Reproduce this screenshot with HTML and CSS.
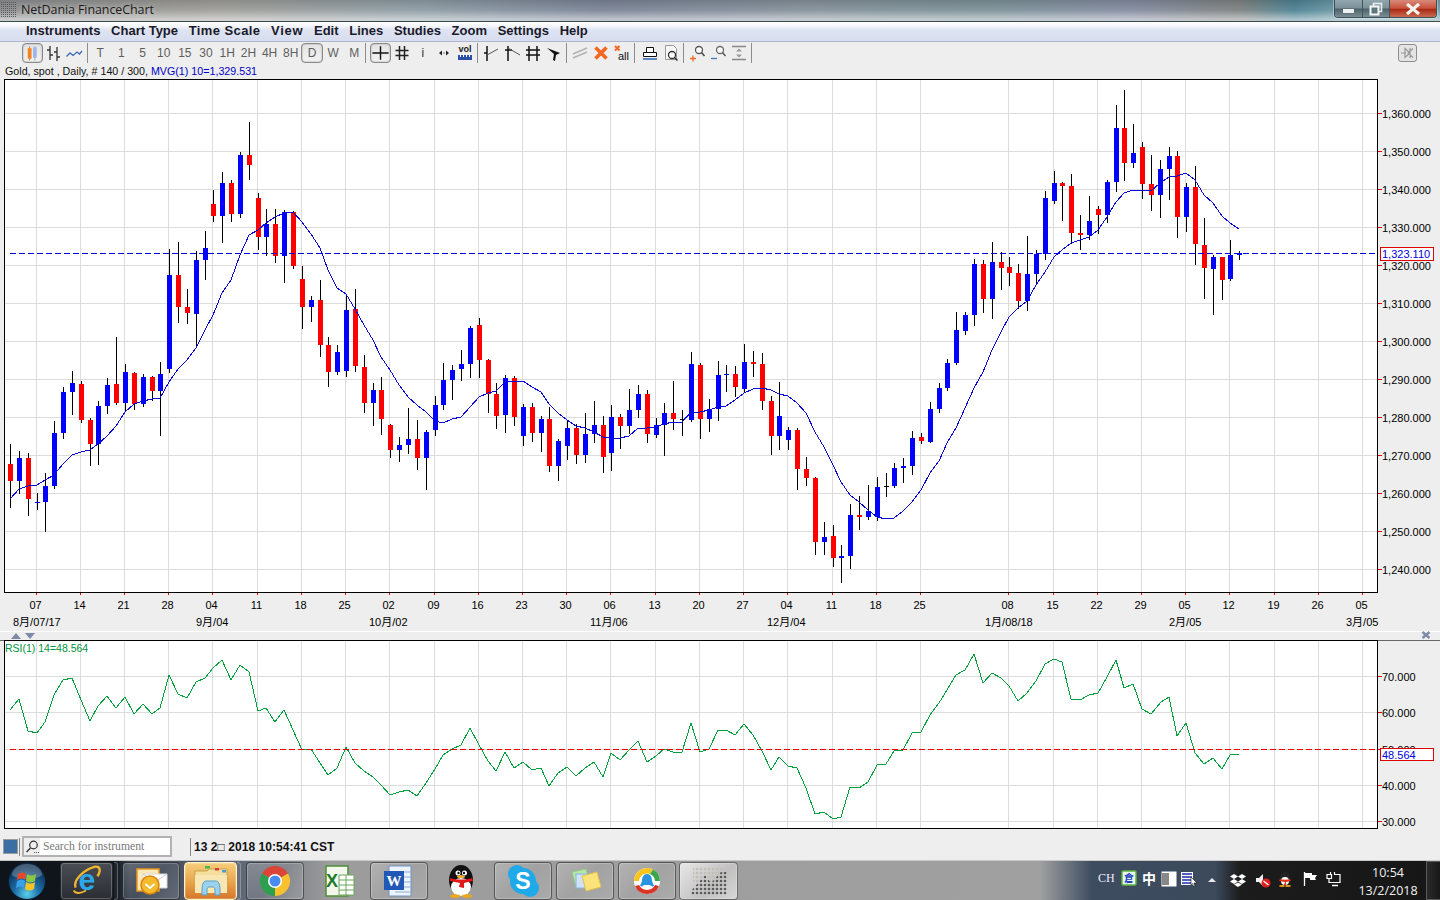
FILE: index.html
```html
<!DOCTYPE html>
<html lang="en">
<head>
<meta charset="utf-8">
<title>NetDania FinanceChart</title>
<link rel="stylesheet" href="styles.css">
</head>
<body>
<div class="window">
  <header class="titlebar">
    <svg class="app-icon" viewBox="0 0 16 16" width="16" height="16"><defs><pattern id="appdots" width="2" height="2" patternUnits="userSpaceOnUse"><rect width="1" height="1" fill="#55585a"/></pattern></defs><rect width="16" height="16" fill="url(#appdots)"/></svg>
    <span class="title-text">NetDania FinanceChart</span>
    <div class="win-controls">
      <div class="win-btn win-min"><i class="min-bar"></i></div>
      <div class="win-btn win-max"><svg viewBox="0 0 14 14" width="14" height="14"><rect x="4.5" y="1.5" width="8" height="8" fill="none" stroke="#e8eef0" stroke-width="1.6"/><rect x="1.5" y="4.5" width="8" height="8" fill="#60777f" stroke="#f4f8fa" stroke-width="2"/></svg></div>
      <div class="win-btn win-close"><svg viewBox="0 0 16 12" width="16" height="12"><path d="M2 1l12 10M14 1L2 11" stroke="#f4f2ee" stroke-width="3.2"/></svg></div>
    </div>
  </header>

  <nav class="menubar">
    <span>Instruments</span><span>Chart Type</span><span class="m-time">Time Scale</span><span class="m-view">View</span><span>Edit</span><span>Lines</span><span>Studies</span><span>Zoom</span><span>Settings</span><span>Help</span>
  </nav>

  <div class="toolbar">
    <div class="cell active"><svg viewBox="0 0 20 20" width="20" height="20"><path d="M7 3v15" stroke="#c9742d"/><rect x="5" y="5" width="4" height="11" fill="#f58220"/><path d="M12.5 3v15" stroke="#90a6cc"/><rect x="10.5" y="4" width="4" height="11" fill="#9db8e6"/></svg></div>
    <div class="cell"><svg viewBox="0 0 20 20" width="20" height="20"><path d="M7 3v14M4 7h3M7 12h3M14 4v14M11 9h3M14 14h3" stroke="#333" stroke-width="1.3" fill="none"/></svg></div>
    <div class="cell"><svg viewBox="0 0 20 20" width="20" height="20"><path d="M2.500 13.500L6 10l3 2.500 4-3.500 2.500 2L18 8" stroke="#3d6cb5" stroke-width="1.300" fill="none"/></svg></div>
    <i class="sep"></i>
    <div class="cell tf">T</div><div class="cell tf">1</div><div class="cell tf">5</div><div class="cell tf">10</div><div class="cell tf">15</div><div class="cell tf">30</div><div class="cell tf">1H</div><div class="cell tf">2H</div><div class="cell tf">4H</div><div class="cell tf">8H</div><div class="cell tf active">D</div><div class="cell tf">W</div><div class="cell tf">M</div>
    <i class="sep sep-wide"></i>
    <div class="cell active"><svg viewBox="0 0 20 20" width="20" height="20"><path d="M1.500 10h17M10 3v14" stroke="#111" stroke-width="1.500"/></svg></div>
    <div class="cell"><svg viewBox="0 0 20 20" width="20" height="20"><path d="M7.500 3v14M12.500 3v14M3.500 7.500h13M3.500 12.500h13" stroke="#222" stroke-width="1.500"/></svg></div>
    <div class="cell tf icon-i">i</div>
    <div class="cell"><svg viewBox="0 0 20 20" width="20" height="20"><path d="M5 10l3-2.500v5zM15 10l-3-2.500v5z" fill="#222"/><path d="M9 10h2" stroke="#777"/></svg></div>
    <div class="cell"><svg viewBox="0 0 20 20" width="20" height="20"><text x="10" y="9" class="vol-text" text-anchor="middle">vol</text><rect x="3" y="12" width="14" height="5" fill="#2c4fa8"/><path d="M5.500 11v3M8.500 10.500v3.500M11.500 11v3M14.500 10.500v3.500" stroke="#fff"/></svg></div>
    <i class="sep"></i>
    <div class="cell"><svg viewBox="0 0 20 20" width="20" height="20"><path d="M6 3v15M3 10h3" stroke="#111" stroke-width="1.500"/><path d="M6 12l11-6" stroke="#555"/></svg></div>
    <div class="cell"><svg viewBox="0 0 20 20" width="20" height="20"><path d="M6 3v15M3 7h7" stroke="#111" stroke-width="1.500"/><path d="M6 5l12 7" stroke="#555"/></svg></div>
    <div class="cell"><svg viewBox="0 0 20 20" width="20" height="20"><path d="M6 3v15M14 3v15M3 7h14M3 12h14" stroke="#111" stroke-width="1.500"/></svg></div>
    <div class="cell"><svg viewBox="0 0 20 20" width="20" height="20"><path d="M3 5l13 5-4 2-1 6-2-1 1-6z" fill="#111"/></svg></div>
    <i class="sep"></i>
    <div class="cell"><svg viewBox="0 0 20 20" width="20" height="20"><path d="M3 11l14-6M3 15l14-6" stroke="#b4b4b4" stroke-width="1.800"/></svg></div>
    <div class="cell"><svg viewBox="0 0 20 20" width="20" height="20"><path d="M4.500 4.500l11 11M15.500 4.500l-11 11" stroke="#f4671f" stroke-width="3.600"/></svg></div>
    <div class="cell"><svg viewBox="0 0 20 20" width="20" height="20"><path d="M3 3l4.500 4.500M7.500 3L3 7.500" stroke="#f4671f" stroke-width="2"/><text x="6" y="17" class="all-text">all</text></svg></div>
    <i class="sep sep-after"></i>
    <div class="cell"><svg viewBox="0 0 20 20" width="20" height="20"><path d="M6.500 4.500h7v5h-7z" fill="#fff" stroke="#111"/><path d="M3.500 9.500h13v4h-13z" fill="#fff" stroke="#111"/><path d="M3 16h14" stroke="#2c62b8" stroke-width="1.500"/></svg></div>
    <div class="cell"><svg viewBox="0 0 20 20" width="20" height="20"><path d="M4.500 2.500h8l3 3v11h-11z" fill="#f6f6f6" stroke="#999"/><circle cx="11" cy="12" r="3.500" fill="#fff" stroke="#333" stroke-width="1.300"/><path d="M13.500 14.500l3 3" stroke="#333" stroke-width="1.500"/></svg></div>
    <i class="sep"></i>
    <div class="cell"><svg viewBox="0 0 20 20" width="20" height="20"><circle cx="12" cy="7" r="3.500" fill="#fff" stroke="#555" stroke-width="1.300"/><path d="M14.500 9.500l3 3.500" stroke="#444" stroke-width="1.500"/><path d="M6 12.500v6M3 15.500h6" stroke="#f4671f" stroke-width="1.300"/></svg></div>
    <div class="cell"><svg viewBox="0 0 20 20" width="20" height="20"><circle cx="12" cy="7" r="3.500" fill="#fff" stroke="#666" stroke-width="1.300"/><path d="M14.500 9.500l3 3.500" stroke="#555" stroke-width="1.500"/><path d="M3 15.500h6" stroke="#4a78c0" stroke-width="1.300"/></svg></div>
    <div class="cell"><svg viewBox="0 0 20 20" width="20" height="20"><path d="M3 3.500h14M3 16.500h14" stroke="#888" stroke-width="1.600"/><path d="M10 5.500l3 3H7zM10 14.500l3-3H7z" fill="#999"/></svg></div>
    <i class="sep"></i>
    <div class="pin"><svg viewBox="0 0 16 14" width="16" height="14"><path d="M1 7h5M5 2.500l5 4.500-5 4.500zM10 2v10M13 2.500L8 7l5 4.500" stroke="#999" stroke-width="1.200" fill="none"/></svg></div>
  </div>

  <div class="info"><span>Gold, spot , Daily, # 140 / 300,</span> <span class="info-mvg">MVG(1) 10=1,329.531</span></div>

  <svg id="price" class="chart chart-price" viewBox="0 79 1440 552" width="1440" height="552"></svg>

  <div class="splitter">
    <i class="tri tri-up"></i><i class="tri tri-down"></i>
    <svg class="split-x" viewBox="0 0 10 8" width="10" height="8"><path d="M1.500 1l7 6M8.500 1l-7 6" stroke="#7d8aa8" stroke-width="2.400"/></svg>
  </div>

  <svg id="rsi" class="chart chart-rsi" viewBox="0 640 1440 189" width="1440" height="189"></svg>

  <div class="status">
    <i class="status-square"></i>
    <i class="status-div"></i>
    <div class="search">
      <div class="search-icon"><svg viewBox="0 0 14 14" width="14" height="14"><circle cx="8.500" cy="5" r="3.800" fill="none" stroke="#333" stroke-width="1.200"/><path d="M5.500 8L1.500 12" stroke="#333" stroke-width="1.400"/><path d="M9 12.500h1M11 12.500h1M13 12.500h1" stroke="#555"/></svg></div>
      <span class="search-text">Search for instrument</span>
    </div>
    <i class="status-div status-div-2"></i>
    <span class="clock-text">13 2□ 2018 10:54:41 CST</span>
  </div>

  <footer class="taskbar">
    <div class="start"><svg viewBox="0 0 40 40" width="40" height="40"><defs><radialGradient id="orb" cx="50%" cy="85%" r="75%"><stop offset="0" stop-color="#5ccfe8"/><stop offset=".45" stop-color="#1c6ea8"/><stop offset="1" stop-color="#0a2a4c"/></radialGradient></defs><circle cx="20" cy="20" r="18.500" fill="url(#orb)" stroke="#0b1c2c"/><path d="M5 14a15 11 0 0 1 30 0c-5 5-25 5-30 0z" fill="#fff" opacity=".25"/><path d="M11 13c3-2 6-2 8 0l-1 6c-2-2-5-2-8 0z" fill="#e8472c"/><path d="M20 13c3 2 6 2 9 0l-1 7c-3 2-6 2-9 0z" fill="#8dc63f"/><path d="M10 20c3-2 6-2 8 0l-1 7c-2-2-5-2-8 0z" fill="#3aa0e8"/><path d="M19 21c3 2 6 2 9 0l-1 7c-3 2-6 2-9 0z" fill="#f7c427"/></svg></div>

    <div class="tb-btn b-ie"><svg viewBox="0 0 38 38" width="38" height="36"><text x="19" y="28" class="ie-e" text-anchor="middle">e</text><path d="M7 26C4 19 15 7 27 4c6-1 7 4 3 10" fill="none" stroke="#f0b72d" stroke-width="2.500"/><path d="M5 29c2 4 8 3 13 0" fill="none" stroke="#f0b72d" stroke-width="2"/></svg></div>
    <i class="stack b-st1"></i>
    <div class="tb-btn b-ol"><svg viewBox="0 0 36 36" width="36" height="36"><path d="M4 6h22v22H4z" fill="#fbe9b7" stroke="#e8971f" stroke-width="1.500"/><path d="M10 11h24v14H10z" fill="#fff" stroke="#d9d9d9"/><path d="M10 11l12 8 12-8" fill="none" stroke="#ccc"/><circle cx="17" cy="22" r="9" fill="#f5bb2e" stroke="#d9860f" stroke-width="1.500"/><path d="M12.500 21l4.500 4 4.500-4" fill="none" stroke="#fff" stroke-width="1.800"/></svg></div>
    <div class="tb-btn b-fo"><svg viewBox="0 0 40 36" width="40" height="36"><path d="M4 8h12l2-2h18v22H4z" fill="#f4de9e" stroke="#c9a24d"/><rect x="14" y="3" width="5" height="2.500" fill="#49b749"/><rect x="24" y="5" width="4" height="2.500" fill="#d83c2e"/><rect x="31" y="7" width="4" height="2.500" fill="#4a9ed8"/><path d="M4 12h32v18H4z" fill="#f8e7b2"/><path d="M11 27c0-7 2-9 4-9h10c2 0 4 2 4 9v5h-5v-5c0-2-1-3-2-3h-4c-1 0-2 1-2 3v5h-5z" fill="#9bd0ee" stroke="#5a9fc8"/></svg></div>
    <i class="stack b-st2"></i>
    <div class="tb-btn b-ch"><svg viewBox="0 0 36 36" width="36" height="36"><path d="M18 18L5 10.500A15 15 0 0 1 31 10.500Z" fill="#dc4437"/><path d="M18 18L31 10.500A15 15 0 0 1 18 33Z" fill="#fbc02d"/><path d="M18 18L18 33A15 15 0 0 1 5 10.500Z" fill="#2e9e4f"/><circle cx="18" cy="18" r="7" fill="#fff"/><circle cx="18" cy="18" r="5.500" fill="#4a8bf0"/></svg></div>
    <div class="tb-flat b-xl"><svg viewBox="0 0 36 36" width="36" height="36"><path d="M6 3h22v30H6z" fill="#f4f8ec" stroke="#4d8f3a" stroke-width="1.500"/><path d="M19 12h15v20H19z" fill="#fff" stroke="#6aa858"/><path d="M19 17h15M19 22h15M19 27h15M26 12v20" stroke="#6aa858"/><text x="12" y="24" class="xl-x" text-anchor="middle">X</text></svg></div>
    <div class="tb-btn b-wd"><svg viewBox="0 0 36 36" width="36" height="36"><path d="M8 3h22v30H8z" fill="#eef4fb" stroke="#6f93c4"/><path d="M14 9h16M14 14h16M14 19h16M14 24h16M14 29h16" stroke="#8eacd6"/><path d="M3 8h20v19H3z" fill="#2157b5"/><text x="13" y="23" class="wd-w" text-anchor="middle">W</text></svg></div>
    <div class="tb-flat b-qq"><svg viewBox="0 0 30 36" width="30" height="36"><ellipse cx="15" cy="17" rx="12" ry="15" fill="#111"/><ellipse cx="15" cy="24" rx="10" ry="9" fill="#fff"/><path d="M6 3c0 0 0 0 0 0" fill="none"/><circle cx="12" cy="10" r="2.500" fill="#fff"/><circle cx="18.500" cy="10" r="2.500" fill="#fff"/><circle cx="12.500" cy="10" r="1.200" fill="#111"/><circle cx="18" cy="10" r="1.200" fill="#111"/><ellipse cx="15" cy="13.500" rx="4" ry="1.500" fill="#f0b030"/><path d="M4 15c6 2 16 2 22 0l1 3-9 2v5l-5-1 1-4-10-2z" fill="#e01818"/><ellipse cx="9" cy="33" rx="5" ry="1.800" fill="#f0a818"/><ellipse cx="21" cy="33" rx="5" ry="1.800" fill="#f0a818"/></svg></div>
    <div class="tb-btn b-sk"><svg viewBox="0 0 36 36" width="36" height="36"><circle cx="12" cy="11" r="9" fill="#1fa9e8"/><circle cx="25" cy="25" r="9" fill="#1fa9e8"/><circle cx="18" cy="18" r="13" fill="#1fa9e8"/><text x="18" y="26" class="sk-s" text-anchor="middle">S</text></svg></div>
    <div class="tb-btn b-no"><svg viewBox="0 0 36 36" width="36" height="36"><path d="M5 9l14-3 4 15-14 3z" fill="#b6e6a8" stroke="#92cc82"/><rect x="9" y="11" width="14" height="14" fill="#cfe2f8" stroke="#8ab4e0"/><path d="M15 13l15-4 4 15-15 4z" fill="#fbe27a" stroke="#e0c24a"/></svg></div>
    <div class="tb-btn b-tn"><svg viewBox="0 0 36 36" width="36" height="36"><circle cx="18" cy="18" r="13" fill="#fff"/><path d="M5 18A13 13 0 0 1 24 6.500L21 11A8 8 0 0 0 10 18z" fill="#f6c51e"/><path d="M24 6.500A13 13 0 0 1 31 18L26 18A8 8 0 0 0 21 11z" fill="#3aa84a"/><path d="M6 23A13 13 0 0 0 30 23L26 22A9 9 0 0 1 10 22z" fill="#d83428"/><path d="M18 11c4 0 5 4 5 7l2 5c-2 1-3 0-4-1h-6c-1 1-2 2-4 1l2-5c0-3 1-7 5-7z" fill="#2a94e0"/></svg></div>
    <div class="tb-btn b-nd"><svg viewBox="0 0 36 36" width="36" height="36"><defs><pattern id="dotl" width="4" height="4" patternUnits="userSpaceOnUse"><circle cx="2" cy="2" r="1.300" fill="#c2bfb4"/></pattern><pattern id="dotd" width="4" height="4" patternUnits="userSpaceOnUse"><circle cx="2" cy="2" r="1.300" fill="#5a5a5a"/></pattern></defs><rect x="2" y="3" width="32" height="18" fill="url(#dotl)"/><path d="M0 28L14 12l6 8 10-11 6 0v23H0z" fill="url(#dotd)"/></svg></div>

    <div class="tray">
      <span class="tray-ch">CH</span>
      <svg class="t-ic" viewBox="0 0 16 16" width="16" height="16"><rect x="1" y="1" width="14" height="14" rx="1" fill="#eaf6ea" stroke="#5fb33f" stroke-width="1.500"/><text x="8" y="12" class="tray-cang" text-anchor="middle">倉</text></svg>
      <span class="tray-zh">中</span>
      <svg class="t-half" viewBox="0 0 16 16" width="16" height="16"><rect x=".5" y=".5" width="15" height="15" fill="#fff"/><rect x="1" y="2" width="7" height="12" fill="#888"/></svg>
      <svg class="t-list" viewBox="0 0 17 16" width="17" height="16"><rect x="0" y="1" width="12" height="13" fill="#fff"/><path d="M1 3h10M1 6h10M1 9h10M1 12h10" stroke="#1a2ea8" stroke-width="1.300"/><path d="M10 6l6 6-3 0 1 3-1.500.5-1-3-1.500 1.500z" fill="#fff" stroke="#111" stroke-width=".6"/></svg>
      <i class="t-up"></i>
      <svg class="t-db" viewBox="0 0 16 14" width="16" height="14"><path d="M4 1l4 2.500-4 2.500-4-2.500zM12 1l4 2.500-4 2.500-4-2.500zM4 6l4 2.500-4 2.500-4-2.500zM12 6l4 2.500-4 2.500-4-2.500zM4 11.500l4-2 4 2-4 2.500z" fill="#fff"/></svg>
      <svg class="t-spk" viewBox="0 0 16 16" width="16" height="16"><path d="M1 6h3l4-4v12l-4-4H1z" fill="#f0f0f0"/><circle cx="11" cy="11" r="4.500" fill="#e0201c"/><path d="M8.500 9l5 4" stroke="#fff" stroke-width="1.500"/></svg>
      <svg class="t-qq" viewBox="0 0 16 16" width="16" height="16"><ellipse cx="8" cy="7" rx="5" ry="6" fill="#222"/><ellipse cx="8" cy="10" rx="4" ry="4" fill="#fff"/><path d="M3 8c3 1 7 1 10 0l1 2-5 1v3H7l1-3-6-1z" fill="#e03018"/><ellipse cx="5" cy="15" rx="3" ry="1" fill="#f0a018"/><ellipse cx="11" cy="15" rx="3" ry="1" fill="#f0a018"/></svg>
      <svg class="t-flag" viewBox="0 0 16 16" width="16" height="16"><path d="M2.500 1v14" stroke="#fff" stroke-width="1.300"/><path d="M3 2h7v2h5l-2 3 1 2H8V7H3z" fill="#fff"/></svg>
      <svg class="t-net" viewBox="0 0 16 16" width="16" height="16"><path d="M5.500 1v2M9.500 1v2M2 3.500h4.500v4H2z" stroke="#fff" fill="none" stroke-width="1.200"/><path d="M4 7.500v4h11V3.500H9" stroke="#fff" fill="none" stroke-width="1.200"/><path d="M7 14.500h6" stroke="#fff" stroke-width="1.500"/></svg>
      <div class="tray-clock"><span>10:54</span><span>13/2/2018</span></div>
      <div class="show-desktop"></div>
    </div>
  </footer>
</div>
<script src="chart.js"></script>
</body>
</html>
```

FILE: styles.css
```css
* { box-sizing: border-box; }
html, body { margin: 0; padding: 0; }
body { width: 1440px; height: 900px; overflow: hidden; background: #eeeeee; font-family: "Liberation Sans", Arial, sans-serif; }
.window { display: flex; flex-direction: column; width: 1440px; height: 900px; }
i { display: block; }

/* title bar */
.titlebar { display: flex; align-items: center; flex: 0 0 22px; height: 22px; padding: 0 0 2px 1px; border-bottom: 1px solid #3c4a50;
  background:
    linear-gradient(180deg, rgba(0,0,0,.12) 0, rgba(255,255,255,.06) 50%, rgba(255,255,255,.5) 92%),
    linear-gradient(90deg, #8e9092 0, #a09f9a 220px, #8f9ea6 420px, #7c8598 600px, #87929c 800px, #7d9399 980px, #858da2 1130px, #7f8482 1240px, #4e8395 1295px, #6e9aa6 1340px, #75a0ab 1440px); }
.app-icon { flex: none; }
.title-text { margin-left: 4px; font: 12.5px/18px "Open Sans", "Liberation Sans", sans-serif; color: #1e1a18; text-shadow: 0 0 5px rgba(255,255,255,.55); letter-spacing: -.1px; }
.win-controls { display: flex; margin-left: auto; margin-right: 3px; align-self: flex-start; height: 18px; border: 1px solid #3a4e56; border-top: 0; border-radius: 0 0 4px 4px; overflow: hidden; box-shadow: 0 0 0 1px rgba(255,255,255,.35); }
.win-btn { display: flex; align-items: center; justify-content: center; height: 17px; border-right: 1px solid #42565e; background: linear-gradient(180deg, #93a6ad 0, #7a8f97 48%, #4d616a 52%, #7c8e94 100%); }
.win-min { width: 28px; }
.win-max { width: 27px; }
.win-close { width: 46px; border-right: 0; background: linear-gradient(180deg, #d8897a 0, #c9523c 48%, #a92a14 55%, #c96a52 100%); }
.min-bar { width: 11px; height: 4px; margin-top: 4px; background: #eef2f2; box-shadow: 0 0 1px #333; }

/* menu */
.menubar { display: flex; flex: 0 0 20px; height: 20px; align-items: center; gap: 10.7px; padding-left: 26px; padding-bottom: 1px; font: bold 13px/18px "Liberation Sans", sans-serif; color: #1a1a2a; background: linear-gradient(180deg, #ffffff 0, #f6f8fc 18%, #dfe4f3 42%, #d7ddef 100%); border-bottom: 1px solid #b0b4cc; }
.m-time { letter-spacing: .4px; }
.m-view { letter-spacing: .7px; }

/* toolbar */
.toolbar { display: flex; flex: 0 0 22px; height: 22px; align-items: center; padding-left: 21.5px; background: #eeeeee; }
.cell { display: flex; align-items: center; justify-content: center; flex: none; width: 21px; height: 20px; }
.tf { width: 21.2px; font: 12px/20px "Liberation Sans", sans-serif; color: #5e5e5e; }
.active { border: 1px solid #8a8a8a; border-radius: 4px; background: linear-gradient(180deg, #e4e4e4, #f3f3f3); box-shadow: inset 0 0 2px #999; }
.icon-i { width: 21px; color: #333; }
.sep { flex: none; width: 1px; height: 20px; margin: 0 2px; background: #8c8c8c; }
.sep-wide { margin-left: 0; margin-right: 4.5px; }
.sep-after { margin-right: 4px; }
.vol-text { font: bold 9px "Liberation Sans", sans-serif; fill: #222; }
.all-text { font: 11px "Liberation Sans", sans-serif; fill: #111; }
.pin { display: flex; align-items: center; justify-content: center; width: 19px; height: 18px; margin-left: auto; margin-right: 23px; border: 1px solid #8e8e8e; border-radius: 3px; background: #e4e4e4; }

.info { flex: 0 0 15px; height: 15px; padding-left: 5px; font: 10.7px/14px "Liberation Sans", sans-serif; color: #111; white-space: pre; }
.info-mvg { color: #0000c8; }

/* charts */
.chart { display: block; flex: none; background: #eeeeee; }
.ax { font: 11px "Liberation Sans", sans-serif; fill: #000; }
.ax-date { font: 11px "Liberation Sans", "Noto Sans CJK SC", sans-serif; fill: #000; }
.val { font: 11px "Liberation Sans", sans-serif; fill: #0000e0; }
.rsi-label { font: 10.5px "Liberation Sans", sans-serif; fill: #00963c; }

.splitter { display: flex; flex: 0 0 9px; height: 9px; align-items: flex-end; padding: 0 9px 1px 11px; border-top: 1px solid #fff; background: #eeeeee; }
.tri { width: 0; height: 0; border-left: 5.5px solid transparent; border-right: 5.5px solid transparent; }
.tri-up { border-bottom: 6px solid #7d8aa8; }
.tri-down { margin-left: 4px; border-top: 6px solid #7d8aa8; }
.split-x { margin-left: auto; margin-bottom: 0; }

/* status */
.status { display: flex; flex: 0 0 31px; height: 31px; align-items: center; padding-left: 4px; background: #eeeeee; padding-top: 4px; }
.status-square { width: 13px; height: 13px; background: #3d6ea3; box-shadow: 0 0 0 1px #9a9a9a; }
.status-div { width: 1px; height: 18px; margin-left: 2px; background: #888; }
.status-div-2 { margin-left: 18px; }
.search { display: flex; align-items: center; width: 150px; height: 21px; margin-left: 2px; border: 2px solid #b2b2b2; background: #fff; }
.search-icon { display: flex; align-items: center; justify-content: center; width: 16px; height: 17px; background: #eeeeee; }
.search-text { margin-left: 3px; font: 11.7px/16px "Liberation Serif", serif; color: #7a7a7a; }
.clock-text { margin-left: 3px; font: bold 12px/16px "Liberation Sans", sans-serif; color: #111; white-space: pre; letter-spacing: .05px; }

/* taskbar */
.taskbar { position: relative; display: flex; flex: 0 0 40px; height: 40px; padding-top: 1px; border-top: 1px solid #c8c8c8; background: linear-gradient(90deg, #0e141a 0, #10161c 115px, #3c4452 130px, #5e6674 240px, #9c9c9c 330px, #a0a0a0 1040px, #3e4c60 1092px, #3c4a5c 1215px, #1c1c1c 1240px, #161616 1440px); }
.start { display: flex; align-items: center; justify-content: center; flex: none; width: 54px; margin-bottom: 1px; }
.tb-btn, .tb-flat { display: flex; align-items: center; justify-content: center; flex: none; height: 38px; }
.tb-btn { border: 1px solid rgba(20,20,20,.55); border-radius: 4px; background: linear-gradient(135deg, rgba(255,255,255,.22), rgba(255,255,255,.05) 50%, rgba(255,255,255,.14)); box-shadow: inset 0 0 0 1px rgba(255,255,255,.22); }
.stack { flex: none; width: 4px; height: 38px; border: 1px solid rgba(255,255,255,.25); border-left: 0; border-radius: 0 3px 3px 0; background: rgba(255,255,255,.06); }
.b-ie { width: 53px; margin-left: 6px; background: linear-gradient(180deg, #4a4e54, #2a2e34); }
.b-st1 { margin-left: 1px; }
.b-ol { width: 58px; margin-left: 4px; }
.b-fo { width: 53px; margin-left: 4px; background: linear-gradient(180deg, #f6cf7c 0, #e8a24a 55%, #d4762a 100%); border-color: #fff2c8; }
.b-st2 { margin-left: 0; }
.b-ch { width: 58px; margin-left: 5px; }
.b-xl { width: 65px; margin-left: 1px; }
.b-wd { width: 58px; }
.b-qq { width: 66px; }
.b-sk { width: 58px; }
.b-no { width: 58px; margin-left: 4px; }
.b-tn { width: 58px; margin-left: 4px; }
.b-nd { width: 59px; margin-left: 3px; background: linear-gradient(135deg, #e8e8e8, #c0c0c0 60%, #d8d8d8); }
.ie-e { font: bold 32px "Liberation Sans", sans-serif; fill: #2aa8ea; }
.xl-x { font: bold 18px "Liberation Sans", sans-serif; fill: #1d7a2c; }
.wd-w { font: bold 15px "Liberation Serif", serif; fill: #fff; }
.sk-s { font: bold 23px "Liberation Sans", sans-serif; fill: #fff; }

.tray { position: absolute; top: 0; right: 0; bottom: 0; width: 350px; color: #fff; }
.tray > * { position: absolute; }
.tray-ch { left: 8px; top: 10px; font: 12px/14px "Liberation Serif", serif; color: #eef; }
.t-ic { left: 31px; top: 9px; }
.tray-cang { font: bold 10px "Noto Sans CJK TC", sans-serif; fill: #2040c0; }
.tray-zh { left: 52px; top: 8px; font: bold 14px/18px "Noto Sans CJK TC", sans-serif; color: #fff; }
.t-half { left: 71px; top: 10px; }
.t-list { left: 91px; top: 10px; }
.t-up { left: 118px; top: 17px; width: 0; height: 0; border-left: 4px solid transparent; border-right: 4px solid transparent; border-bottom: 4px solid #e8e8e8; }
.t-db { left: 140px; top: 12px; }
.t-spk { left: 165px; top: 11px; }
.t-qq { left: 187px; top: 10px; }
.t-flag { left: 212px; top: 10px; }
.t-net { left: 235px; top: 10px; }
.tray-clock { left: 263px; top: 3px; display: flex; flex-direction: column; align-items: center; width: 70px; font: 12.5px/18px "Open Sans", "Liberation Sans", sans-serif; color: #f2f2f2; }
.show-desktop { right: 0; top: 0; bottom: 0; width: 14px; border: 1px solid #5a5a5a; border-right: 0; background: linear-gradient(90deg, #2a2a2a, #181818); }
```

FILE: chart.js
```js
var NS = 'http://www.w3.org/2000/svg';
function el(p, n, a, t) {
  var e = document.createElementNS(NS, n);
  for (var k in a) e.setAttribute(k, a[k]);
  if (t !== undefined) e.textContent = t;
  p.appendChild(e);
  return e;
}
var GX = [36,80,124,168,212,257,301,345,389,434,478,522,566,610,655,699,743,787,832,876,920,1008,1053,1097,1141,1185,1229,1274,1318,1362];
var DAYS = ['07','14','21','28','04','11','18','25','02','09','16','23','30','06','13','20','27','04','11','18','25','08','15','22','29','05','12','19','26','05'];
var MONTHS = [[13,'8月/07/17'],[196,'9月/04'],[369,'10月/02'],[590,'11月/06'],[767,'12月/04'],[985,'1月/08/18'],[1169,'2月/05'],[1346,'3月/05']];
// x, wick high, body top, body bottom, wick low, colour (r, b, k)
var C = [
[10,444,464,481,508,'r'],[19,451,458,481,494,'b'],[28,453,458,499,516,'r'],[37,493,502,503,510,'b'],[45,473,486,502,532,'b'],
[54,421,433,486,489,'b'],[63,387,392,433,439,'b'],[72,371,383,392,415,'b'],[81,381,384,420,423,'r'],[90,418,420,444,466,'r'],
[98,401,406,444,465,'b'],[107,378,385,406,414,'b'],[116,337,384,403,405,'r'],[125,364,372,403,411,'b'],[134,372,373,404,410,'r'],
[143,374,377,404,407,'b'],[152,376,377,391,401,'r'],[160,362,374,391,436,'b'],[169,249,275,369,373,'b'],[178,242,275,307,323,'r'],
[187,289,307,313,324,'r'],[196,251,260,314,348,'b'],[205,231,248,260,280,'b'],[213,190,204,216,222,'r'],[222,172,183,216,243,'b'],
[231,180,183,214,222,'r'],[240,152,155,214,218,'b'],[249,122,155,165,180,'r'],[258,193,198,237,250,'r'],[266,209,224,237,256,'b'],
[275,209,224,256,263,'r'],[284,210,212,256,283,'b'],[293,211,212,266,269,'r'],[302,266,279,307,329,'r'],[311,296,300,307,322,'b'],
[320,280,300,345,357,'r'],[328,337,345,372,387,'r'],[337,345,352,372,375,'b'],[346,294,310,371,377,'b'],[355,289,309,366,372,'r'],
[364,355,367,403,413,'r'],[373,383,390,403,426,'b'],[381,377,390,419,435,'r'],[390,424,425,450,458,'r'],[399,437,445,450,462,'b'],
[408,408,439,445,454,'b'],[417,420,439,458,470,'r'],[426,430,432,458,490,'b'],[435,396,405,430,436,'b'],[443,363,380,405,410,'b'],
[452,365,370,380,400,'b'],[461,350,364,369,381,'b'],[470,326,328,364,378,'b'],[479,318,325,360,378,'r'],[488,359,360,394,413,'r'],
[496,383,394,416,429,'r'],[505,375,378,415,433,'b'],[514,376,378,417,426,'r'],[523,404,407,436,446,'b'],[532,403,407,433,442,'r'],
[541,416,419,433,452,'b'],[549,407,419,466,472,'r'],[558,439,441,466,481,'b'],[567,420,428,446,460,'b'],[576,424,428,455,464,'r'],
[585,413,434,455,463,'b'],[594,401,425,434,443,'b'],[603,416,425,457,473,'r'],[611,405,417,453,471,'b'],[620,414,417,426,449,'r'],
[629,389,410,426,434,'b'],[638,385,394,410,418,'b'],[647,390,394,434,443,'r'],[656,418,425,435,438,'b'],[664,403,413,425,456,'b'],
[673,381,413,419,430,'r'],[682,410,419,420,436,'k'],[691,352,364,420,422,'b'],[700,363,365,419,439,'r'],[709,399,409,419,432,'b'],
[718,361,375,409,421,'b'],[726,365,374,375,392,'b'],[735,366,374,387,397,'r'],[744,344,362,389,392,'b'],[753,351,362,364,377,'r'],
[762,353,364,401,410,'r'],[771,396,401,436,455,'r'],[779,382,416,436,450,'b'],[788,427,430,440,450,'b'],[797,428,430,469,490,'r'],
[806,457,469,478,486,'r'],[815,477,478,542,555,'r'],[824,522,537,542,555,'b'],[833,525,536,558,567,'r'],[841,545,556,558,583,'b'],
[850,504,515,556,569,'b'],[859,496,515,517,530,'r'],[868,485,511,517,520,'b'],[877,477,487,517,521,'b'],[886,473,486,487,497,'k'],
[894,463,468,486,488,'b'],[903,458,466,468,483,'b'],[912,431,438,466,475,'b'],[921,433,437,441,444,'r'],[930,402,409,442,443,'b'],
[939,383,388,409,413,'b'],[947,359,363,388,391,'b'],[956,312,330,363,365,'b'],[965,312,315,331,335,'b'],[974,259,264,315,326,'b'],
[983,260,264,299,313,'r'],[992,242,262,299,319,'b'],[1001,252,262,268,290,'r'],[1009,257,267,273,286,'r'],[1018,264,273,301,309,'r'],
[1027,236,274,301,311,'b'],[1036,250,254,274,283,'b'],[1045,191,198,254,260,'b'],[1054,171,183,201,204,'b'],[1062,182,183,186,221,'r'],
[1071,174,186,233,244,'r'],[1080,215,233,235,250,'r'],[1089,196,221,235,240,'b'],[1098,206,209,215,234,'r'],[1107,180,182,215,223,'b'],
[1116,105,128,182,192,'b'],[1124,90,128,163,181,'r'],[1133,124,153,163,168,'b'],[1142,142,147,184,199,'r'],[1151,155,184,195,211,'r'],
[1160,160,169,195,218,'b'],[1169,147,156,169,200,'b'],[1177,151,156,217,238,'r'],[1186,183,187,217,232,'b'],[1195,166,187,244,265,'r'],
[1204,218,245,268,299,'r'],[1213,255,257,269,315,'b'],[1222,257,257,280,300,'r'],[1230,240,255,279,281,'b'],[1239,251,253,255,260,'b']
];
var MA = '10,499 19,489 28,486 37,485 45,480 54,475 63,464 72,455 81,452 90,450 98,444 107,436 116,426 125,412 134,404 143,401 152,399 160,398 169,382 178,369 187,360 196,348 205,330 213,315 222,293 231,280 240,255 249,235 258,230 266,223 275,217 284,213 293,212 302,222 311,234 320,248 328,270 337,288 346,294 355,309 364,325 373,340 381,357 390,370 399,385 408,397 417,405 426,412 435,421 443,423 452,419 461,417 470,407 479,397 488,393 496,391 505,382 514,381 523,381 532,387 541,392 549,404 558,413 567,420 576,426 585,428 594,432 603,437 611,438 620,438 629,436 638,428 647,428 656,427 664,424 673,422 682,422 691,412 700,412 709,410 718,407 726,406 735,400 744,393 753,389 762,388 771,390 779,394 788,396 797,403 806,413 815,432 824,447 833,465 841,482 850,495 859,502 868,510 877,517 886,519 894,518 903,511 912,502 921,490 930,473 939,461 947,443 956,428 965,408 974,388 983,372 992,350 1001,332 1009,317 1018,308 1027,301 1036,285 1045,272 1054,257 1062,250 1071,243 1080,240 1089,237 1098,230 1107,217 1116,202 1124,193 1133,190 1142,190 1151,191 1160,183 1169,177 1177,176 1186,173 1195,180 1204,195 1213,203 1222,216 1230,223 1239,229';
var RSI = '10,710 19,699 28,731 37,733 45,722 54,695 63,680 72,678 81,700 90,721 98,706 107,696 116,708 125,697 134,714 143,704 152,714 160,708 169,675 178,694 187,698 196,682 205,678 213,668 222,660 231,680 240,665 249,672 258,711 266,708 275,722 284,710 293,730 302,750 311,749 320,763 328,775 337,768 346,747 355,763 364,771 373,777 381,785 390,795 399,792 408,790 417,796 426,783 435,769 443,755 452,749 461,745 470,728 479,745 488,761 496,771 505,752 514,768 523,762 532,770 541,768 549,786 558,773 567,767 576,776 585,768 594,762 603,777 611,753 620,760 629,750 638,741 647,762 656,756 664,749 673,752 682,752 691,723 700,752 709,749 718,730 726,730 735,735 744,724 753,735 762,751 771,770 779,757 788,766 797,768 806,788 815,814 824,812 833,819 841,817 850,787 859,788 868,782 877,765 886,764 894,751 903,750 912,733 921,732 930,715 939,703 947,690 956,675 965,670 974,654 983,683 992,673 1001,678 1009,686 1018,701 1027,693 1036,681 1045,664 1054,659 1062,662 1071,699 1080,700 1089,695 1098,693 1107,677 1116,660 1124,688 1133,684 1142,709 1151,714 1161,702 1169,697 1177,736 1186,723 1195,753 1204,764 1213,758 1222,769 1230,755 1239,754';

function grid(svg, top, bottom, ys) {
  var g = el(svg, 'g', {'shape-rendering': 'crispEdges'});
  el(g, 'rect', {x: 4, y: top, width: 1374, height: bottom - top + 1, fill: '#fff'});
  ys.forEach(function (y) { el(g, 'rect', {x: 5, y: y, width: 1372, height: 1, fill: '#dcdcdc'}); });
  GX.forEach(function (x) { el(g, 'rect', {x: x, y: top + 1, width: 1, height: bottom - top - 1, fill: '#dcdcdc'}); });
}
function frame(svg, top, bottom) {
  el(svg, 'rect', {x: 4.5, y: top + .5, width: 1373, height: bottom - top, fill: 'none', stroke: '#000', 'stroke-width': 1, 'shape-rendering': 'crispEdges'});
}
function ticks(svg, ys, labels) {
  ys.forEach(function (y, i) {
    el(svg, 'rect', {x: 1378, y: y, width: 4, height: 1, fill: '#e00000', 'shape-rendering': 'crispEdges'});
    el(svg, 'text', {x: 1382, y: y + 5, 'class': 'ax'}, labels[i]);
  });
}
function valueBox(svg, y, h, text) {
  el(svg, 'rect', {x: 1380.5, y: y + .5, width: 53, height: h, fill: '#fff', stroke: '#e00000', 'shape-rendering': 'crispEdges'});
  el(svg, 'text', {x: 1382, y: y + 11, 'class': 'val'}, text);
}
function line(svg, pts, col) {
  el(svg, 'polyline', {points: pts, fill: 'none', stroke: col, 'stroke-width': 1, 'shape-rendering': 'crispEdges'});
}
function dash(svg, y, col) {
  el(svg, 'line', {x1: 10, x2: 1377, y1: y + .5, y2: y + .5, stroke: col, 'stroke-width': 1, 'stroke-dasharray': '6 3', 'shape-rendering': 'crispEdges'});
}

(function price() {
  var s = document.getElementById('price');
  var ys = [113,151,189,227,265,303,341,379,417,455,493,531,569];
  grid(s, 79, 592, ys);
  var g = el(s, 'g', {'shape-rendering': 'crispEdges'});
  var col = {r: '#ff0000', b: '#0000ff', k: '#000000'};
  C.forEach(function (c) {
    el(g, 'rect', {x: c[0], y: c[1], width: 1, height: c[4] - c[1], fill: '#000'});
    el(g, 'rect', {x: c[0] - 2, y: c[2], width: 5, height: Math.max(1, c[3] - c[2]), fill: col[c[5]]});
  });
  line(s, MA, '#0808d8');
  dash(s, 253, '#0000e0');
  frame(s, 79, 592);
  var labels = [];
  for (var v = 360; v >= 240; v -= 10) labels.push('1,' + v + '.000');
  ticks(s, ys, labels);
  valueBox(s, 247, 13, '1,323.110');
  GX.forEach(function (x, i) {
    el(s, 'rect', {x: x, y: 593, width: 1, height: 2, fill: '#e00000', 'shape-rendering': 'crispEdges'});
    el(s, 'text', {x: x - 0.5, y: 609, 'class': 'ax', 'text-anchor': 'middle'}, DAYS[i]);
  });
  MONTHS.forEach(function (m) { el(s, 'text', {x: m[0], y: 626, 'class': 'ax-date'}, m[1]); });
})();

(function rsi() {
  var s = document.getElementById('rsi');
  el(s, 'rect', {x: 0, y: 640, width: 1440, height: 1, fill: '#666', 'shape-rendering': 'crispEdges'});
  var ys = [676,712,749,785,821];
  grid(s, 640, 828, ys);
  line(s, RSI, '#00a03c');
  dash(s, 749, '#e80000');
  frame(s, 640, 828);
  ticks(s, ys, ['70.000','60.000','50.000','40.000','30.000']);
  valueBox(s, 748, 12, '48.564');
  el(s, 'text', {x: 5, y: 652, 'class': 'rsi-label'}, 'RSI(1) 14=48.564');
})();
```
